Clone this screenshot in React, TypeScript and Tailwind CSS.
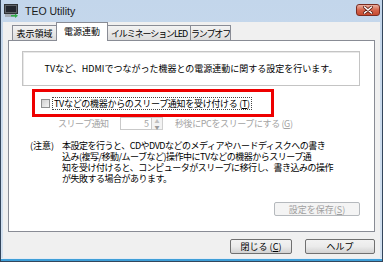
const jp = "font-['Noto_Sans_CJK_JP','Liberation_Sans',sans-serif]";

const Tab = ({ label, w, active, tight }: { label: string; w: string; active?: boolean; tight?: boolean }) => {
  if (active) {
    return (
      <div
        className={`${w} relative z-10 -ml-px mb-[-1px] flex h-[19px] items-center justify-center border border-b-0 border-[#898c95] bg-white pb-[2px]`}
      >
        {label}
      </div>
    );
  }
  return (
    <div
      className={`${w} -ml-px flex h-[15px] items-center justify-center overflow-hidden whitespace-nowrap border border-b-0 border-[#898c95] bg-gradient-to-b from-[#f3f3f3] to-[#dcdcdc] ${tight ? 'tracking-[-1.1px]' : ''}`}
    >
      {label}
    </div>
  );
};

const AppIcon = () => (
  <svg width="15" height="14" viewBox="0 0 15 14">
    <rect x="0.5" y="0.5" width="13" height="9" fill="#5f6368" stroke="#2f3336" />
    <rect x="2" y="2" width="10" height="6" fill="#23272e" />
    <rect x="1" y="10" width="11" height="3" fill="#a4acb5" />
    <path d="M7 11h4V9.5l3 2.2-3 2.2V12.5H7z" fill="#2fae4a" />
  </svg>
);

const CloseButton = () => (
  <div className="mt-[4px] mr-[2px] flex h-[12px] w-[24px] items-center justify-center self-start rounded-[3px] border border-[#7a2c22] bg-gradient-to-b from-[#eab1a3] via-[#d4644c] to-[#c74a2e]">
    <svg width="10" height="8" viewBox="0 0 10 8">
      <path d="M1.5 1 8.5 7M8.5 1 1.5 7" stroke="#5a1c14" strokeWidth="3" strokeLinecap="round" />
      <path d="M1.5 1 8.5 7M8.5 1 1.5 7" stroke="#ffffff" strokeWidth="1.6" strokeLinecap="round" />
    </svg>
  </div>
);

const Button = ({ label, w, disabled }: { label: React.ReactNode; w: string; disabled?: boolean }) => (
  <div
    className={`${w} flex items-center justify-center rounded-[2px] border ${
      disabled
        ? 'border-[#b5b9bd] bg-[#f4f4f4] text-[#a0a0a0]'
        : 'border-[#707070] bg-gradient-to-b from-[#f2f2f2] via-[#ebebeb] to-[#d2d2d2] text-black'
    }`}
  >
    {label}
  </div>
);

const App = () => {
  return (
    <div
      className={`flex h-[262px] w-[383px] flex-col overflow-hidden border-x border-b border-[#34465c] bg-gradient-to-b from-[#c3d6eb] to-[#d3e1f0] text-[9px] leading-[11px] text-black ${jp}`}
    >
      {/* title bar */}
      <div className="flex h-[22px] shrink-0 items-center pl-[3px]">
        <AppIcon />
        <span className="ml-[6px] font-['Liberation_Sans',sans-serif] text-[10.5px] text-[#1a1a1a]">TEO Utility</span>
        <div className="flex-1" />
        <CloseButton />
      </div>

      {/* client area */}
      <div className="mx-[2px] flex flex-1 flex-col bg-[#f0f0f0] px-[5px]">
        {/* tabs */}
        <div className="flex h-[18px] shrink-0 items-end pl-[5px]">
          <Tab label="表示領域" w="w-[45px]" />
          <Tab label="電源連動" w="w-[52px]" active />
          <Tab label="イルミネーションLED" w="w-[84px]" tight />
          <Tab label="ランプオフ" w="w-[41px]" tight />
        </div>

        {/* tab page */}
        <div className="flex h-[192px] shrink-0 flex-col border border-[#898c95] bg-white">
          <div className="mt-[10px] ml-[13px] mr-[14px] flex h-[35px] items-center justify-center border border-[#c4c4c4] shadow-[inset_1px_1px_0_#e8e8e8]">
            TVなど、HDMIでつながった機器との電源連動に関する設定を行います。
          </div>

          <div className="mt-[3px] ml-[23px] flex h-[28px] w-[242px] items-center border-[3px] border-[#ee0000] pl-[6px]">
            <div className="h-[9px] w-[9px] border border-[#8e8f8f] bg-gradient-to-br from-[#cfcfcf] to-[#f4f4f4]" />
            <div className="ml-[2px] border border-dotted border-[#444] px-[1px] tracking-[-0.3px]">
              TVなどの機器からのスリープ通知を受け付ける (<span className="underline">T</span>)
            </div>
          </div>

          <div className="flex h-[13px] items-center text-[#a3a3a3]">
            <div className="ml-[49px] w-[62px] tracking-[-0.5px]">スリープ通知</div>
            <div className="flex h-[13px] w-[32px] items-center justify-end border border-[#c9c9c9] pr-[2px]">5</div>
            <div className="flex h-[13px] w-[11px] flex-col border border-l-0 border-[#cfcfcf] bg-[#f3f3f3]">
              <div className="flex flex-1 items-center justify-center text-[5px] leading-none text-[#c0c0c0]">▲</div>
              <div className="flex flex-1 items-center justify-center text-[5px] leading-none text-[#9a9a9a]">▼</div>
            </div>
            <div className="ml-[12px] tracking-[-0.4px]">
              秒後にPCをスリープにする (<span className="underline">G</span>)
            </div>
          </div>

          <div className="mt-[10px] ml-[21px] flex leading-[11px]">
            <div className="w-[32px] shrink-0">(注意)</div>
            <div className="whitespace-nowrap tracking-[-0.5px]">
              本設定を行うと、CDやDVDなどのメディアやハードディスクへの書き
              <br />
              込み(複写/移動/ムーブなど)操作中にTVなどの機器からスリープ通
              <br />
              知を受け付けると、コンピュータがスリープに移行し、書き込みの操作
              <br />
              が失敗する場合があります。
            </div>
          </div>

          <div className="mt-auto mr-[14px] mb-[15px] self-end">
            <Button w="w-[86px] h-[14px]" disabled label={<>設定を保存(<span className="underline">S</span>)</>} />
          </div>
        </div>

        {/* dialog buttons */}
        <div className="mt-[7px] flex justify-end gap-[13px]">
          <Button w="w-[62px] h-[15px]" label={<>閉じる (<span className="underline">C</span>)</>} />
          <Button w="w-[70px] h-[15px]" label="ヘルプ" />
        </div>
        <div className="flex-1" />
      </div>
      <div className="h-[1px] shrink-0 bg-[#e4ecf5]" />
      <div className="h-[2px] shrink-0 bg-[#3f9fd8]" />
    </div>
  );
};

export default App;
